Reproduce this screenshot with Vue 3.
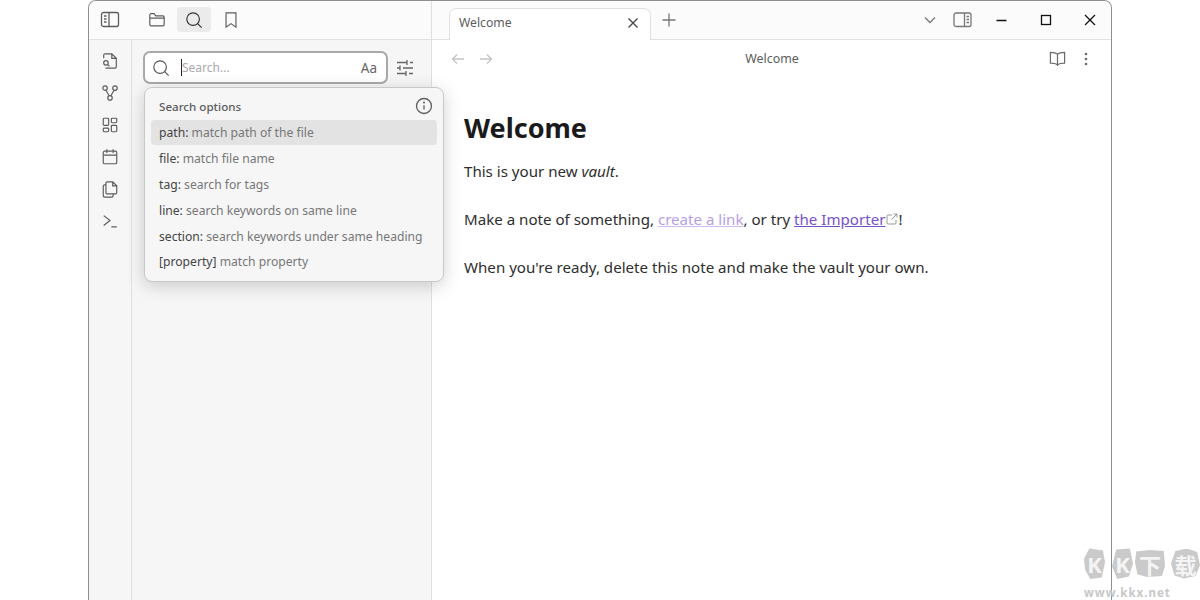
<template>
  <div class="page">
    <div class="window">
      <header class="titlebar">
        <div class="left-head">
          <button class="icon-btn collapse">
            <svg viewBox="0 0 20 20" width="20" height="20"><rect x="1.500" y="2.500" width="17" height="14" rx="2" /><path d="M9 2.500v14M4 6h2.500M4 9h2.500M4 12h2.500" /></svg>
          </button>
          <div class="tabs-head">
            <button class="icon-btn">
              <svg viewBox="0 0 20 20" width="18" height="18"><path d="M2 15V4.500a1.500 1.500 0 0 1 1.500-1.500h3.200l2 2.500h7.800a1.500 1.500 0 0 1 1.500 1.500v8a1.500 1.500 0 0 1-1.500 1.500h-13A1.500 1.500 0 0 1 2 15zM2 8h16" /></svg>
            </button>
            <button class="icon-btn active">
              <svg viewBox="0 0 20 20" width="18" height="18"><circle cx="9" cy="9" r="7" /><path d="M14 14l4.500 4.500" /></svg>
            </button>
            <button class="icon-btn">
              <svg viewBox="0 0 20 20" width="18" height="18"><path d="M4.500 2h11v16L10 14l-5.500 4z" /></svg>
            </button>
          </div>
        </div>
        <div class="tab-strip">
          <div class="tab">
            <span>Welcome</span>
            <svg class="tab-close" viewBox="0 0 12 12" width="12" height="12"><path d="M1.500 1.500l9 9M10.500 1.500l-9 9" /></svg>
          </div>
          <svg class="tab-new" viewBox="0 0 14 14" width="14" height="14"><path d="M7 .5v13M.5 7h13" /></svg>
          <div class="spacer"></div>
          <svg class="chev" viewBox="0 0 12 8" width="12" height="8"><path d="M1 1.500l5 5 5-5" /></svg>
          <svg class="right-toggle" viewBox="0 0 20 16" width="20" height="16"><rect x="1" y="1" width="17" height="13.500" rx="2" /><path d="M11.500 1v13.500M13.500 4.500h2.500M13.500 7.500h2.500M13.500 10.500h2.500" /></svg>
          <div class="win-controls">
            <svg viewBox="0 0 12 12" width="12" height="12"><path d="M.5 6.500h10" /></svg>
            <svg viewBox="0 0 12 12" width="12" height="12"><rect x="1.500" y="1.500" width="9" height="9" /></svg>
            <svg viewBox="0 0 12 12" width="12" height="12"><path d="M1 1l10 10M11 1L1 11" /></svg>
          </div>
        </div>
      </header>

      <div class="body">
        <nav class="ribbon">
          <svg viewBox="0 0 20 20" width="18" height="18"><path d="M3 7V3.500A1.500 1.500 0 0 1 4.500 2H12l5 5v9.500a1.500 1.500 0 0 1-1.500 1.500H5M12 2v5h5" /><circle cx="5.500" cy="12" r="2.500" /><path d="M7.500 14l2 2" /></svg>
          <svg viewBox="0 0 20 20" width="18" height="18"><circle cx="4.500" cy="4.500" r="2.500" /><circle cx="15.500" cy="4.500" r="2.500" /><circle cx="10" cy="15.500" r="2.500" /><path d="M5.500 7l3.500 6M14.500 7L11 13" /></svg>
          <svg viewBox="0 0 20 20" width="18" height="18"><rect x="2.500" y="2.500" width="6" height="8" rx="1" /><rect x="11.500" y="2.500" width="6" height="5" rx="1" /><rect x="11.500" y="10.500" width="6" height="7" rx="1" /><rect x="2.500" y="13.500" width="6" height="4" rx="1" /></svg>
          <svg viewBox="0 0 20 20" width="18" height="18"><rect x="2.500" y="3.500" width="15" height="14" rx="1.500" /><path d="M2.500 8h15M6.500 1.500v4M13.500 1.500v4" /></svg>
          <svg viewBox="0 0 20 20" width="18" height="18"><path d="M7 2h6l4.500 4.500V14a1.500 1.500 0 0 1-1.500 1.500H7A1.500 1.500 0 0 1 5.500 14V3.500A1.500 1.500 0 0 1 7 2zM13 2v4.500h4.500" /><path d="M5.500 5.500H4A1.500 1.500 0 0 0 2.500 7v10.500A1.500 1.500 0 0 0 4 19h8a1.500 1.500 0 0 0 1.500-1.500v-2" /></svg>
          <svg viewBox="0 0 20 20" width="18" height="18"><path d="M3 4l7 5.500L3 15M11.500 16.500h6" /></svg>
        </nav>

        <aside class="sidebar">
          <div class="search-row">
            <div class="search-box">
              <svg class="search-glass" viewBox="0 0 20 20" width="18" height="18"><circle cx="9" cy="9" r="7" /><path d="M14 14l4.500 4.500" /></svg>
              <span class="caret"></span>
              <span class="placeholder">Search...</span>
              <span class="match-case">Aa</span>
            </div>
            <svg class="filter-icon" viewBox="0 0 18 18" width="18" height="18"><path d="M1 3.500h10M14 3.500h3M11 1v5M1 9h3M7 9h10M4 6.500v5M1 14.500h9M13 14.500h4M10 12v5" /></svg>
          </div>

          <div class="popover">
            <div class="pop-head">
              <span>Search options</span>
              <svg viewBox="0 0 18 18" width="18" height="18"><circle cx="9" cy="9" r="7.500" /><path d="M9 8.200v4.300" /><circle class="dot" cx="9" cy="5.500" r="1" /></svg>
            </div>
            <div
              v-for="(opt, i) in options"
              :key="opt.key"
              class="pop-item"
              :class="{ selected: i === 0 }"
            >
              <span class="key">{{ opt.key }}</span> {{ opt.desc }}
            </div>
          </div>
        </aside>

        <main class="content">
          <div class="view-header">
            <div class="nav-arrows">
              <svg viewBox="0 0 14 12" width="14" height="12"><path d="M13 6H1.500M6 1.500L1.500 6 6 10.500" /></svg>
              <svg viewBox="0 0 14 12" width="14" height="12"><path d="M1 6h11.500M8 1.500L12.500 6 8 10.500" /></svg>
            </div>
            <div class="view-title">Welcome</div>
            <div class="view-actions">
              <svg viewBox="0 0 18 18" width="17" height="17"><path d="M9 4.500C7.500 3 5 2.500 1.500 2.500v11.500c3.500 0 6 .5 7.500 1.500 1.500-1 4-1.500 7.500-1.500V2.500C13 2.500 10.500 3 9 4.500zM9 4.500v12.500" /></svg>
              <svg class="dots" viewBox="0 0 4 14" width="4" height="14"><circle cx="2" cy="2" r="1.300" /><circle cx="2" cy="7" r="1.300" /><circle cx="2" cy="12" r="1.300" /></svg>
            </div>
          </div>
          <article class="note">
            <h1>Welcome</h1>
            <p>This is your new <em>vault</em>.</p>
            <p>Make a note of something, <a class="internal">create a link</a>, or try <a class="external">the Importer</a><svg class="ext" viewBox="0 0 12 12" width="12" height="12"><path d="M6 2H2a1 1 0 0 0-1 1v7a1 1 0 0 0 1 1h7a1 1 0 0 0 1-1V7M7.500 1H11v3.500M11 1L5.500 6.500" /></svg>!</p>
            <p>When you're ready, delete this note and make the vault your own.</p>
          </article>
        </main>
      </div>
    </div>

    <div class="watermark">
      <div class="wm-logo">
        <span class="b1">K</span><span class="b2">K</span><span class="b3">下</span><span class="b4">载</span>
      </div>
      <div class="wm-url">www.kkx.net</div>
    </div>
  </div>
</template>

<script setup>
const options = [
  { key: 'path:', desc: 'match path of the file' },
  { key: 'file:', desc: 'match file name' },
  { key: 'tag:', desc: 'search for tags' },
  { key: 'line:', desc: 'search keywords on same line' },
  { key: 'section:', desc: 'search keywords under same heading' },
  { key: '[property]', desc: 'match property' },
]
</script>

<style>
html,
body {
  margin: 0;
  background: #fff;
}
</style>

<style scoped>
.page {
  position: relative;
  width: 1200px;
  height: 600px;
  overflow: hidden;
  background: #fff;
  font-family: "Noto Sans", "Noto Sans CJK SC", sans-serif;
  color: #222;
}
svg {
  fill: none;
  stroke: currentColor;
  stroke-width: 1.3;
  flex: none;
}
.window {
  width: 1024px;
  height: 600px;
  margin-left: 88px;
  box-sizing: border-box;
  border: 1px solid #8e8e8e;
  border-bottom: 0;
  border-radius: 8px 8px 0 0;
  display: flex;
  flex-direction: column;
  overflow: hidden;
}
.titlebar {
  height: 39px;
  flex: none;
  display: flex;
  background: #fbfbfb;
  box-sizing: border-box;
  border-bottom: 1px solid #e0e0e0;
}
.left-head {
  width: 343px;
  flex: none;
  display: flex;
  align-items: center;
  box-sizing: border-box;
  padding: 0 0 2px 11px;
  border-right: 1px solid #e0e0e0;
  margin-bottom: -1px;
}
.icon-btn {
  width: 34px;
  height: 25px;
  border: 0;
  padding: 0;
  background: none;
  border-radius: 4px;
  display: flex;
  align-items: center;
  justify-content: center;
  color: #5c5c5c;
}
.icon-btn.collapse {
  width: 20px;
}
.icon-btn.active {
  background: #ebebeb;
  color: #333;
}
.tabs-head {
  display: flex;
  gap: 3px;
  margin-left: 20px;
}
.tab-strip {
  flex: 1;
  display: flex;
  align-items: center;
  padding-left: 17px;
  color: #5c5c5c;
}
.tab {
  width: 202px;
  height: 32px;
  box-sizing: border-box;
  align-self: flex-end;
  padding: 0 11px 4px 9px;
  background: #fff;
  border: 1px solid #e0e0e0;
  border-bottom: 0;
  border-radius: 7px 7px 0 0;
  display: flex;
  align-items: center;
  justify-content: space-between;
  font-size: 12.200px;
  color: #5c5c5c;
  position: relative;
  top: 1px;
}
.tab-close {
  color: #444;
}
.tab-new {
  margin-left: 11px;
  color: #777;
}
.spacer {
  flex: 1;
}
.chev {
  color: #777;
}
.right-toggle {
  margin-left: 17px;
  color: #777;
}
.win-controls {
  display: flex;
  align-items: center;
  gap: 32px;
  margin-left: 23px;
  margin-right: 15px;
  color: #111;
}
.body {
  flex: 1;
  min-height: 0;
  display: flex;
}
.ribbon {
  width: 43px;
  flex: none;
  box-sizing: border-box;
  padding-top: 12px;
  background: #f6f6f6;
  border-right: 1px solid #e0e0e0;
  display: flex;
  flex-direction: column;
  align-items: center;
  gap: 14px;
  color: #5c5c5c;
}
.sidebar {
  position: relative;
  width: 300px;
  flex: none;
  box-sizing: border-box;
  background: #f6f6f6;
  border-right: 1px solid #e0e0e0;
  padding: 11px 0 0 11px;
}
.search-row {
  display: flex;
  align-items: center;
  gap: 8px;
}
.search-box {
  width: 245px;
  height: 33px;
  box-sizing: border-box;
  background: #fff;
  border: 2.500px solid #a9a9a9;
  border-radius: 7px;
  display: flex;
  align-items: center;
  padding: 0 9px 0 7px;
  color: #555;
}
.caret {
  width: 1px;
  height: 17px;
  background: #222;
  margin-left: 11px;
}
.placeholder {
  font-size: 12px;
  color: #aaa;
  flex: 1;
}
.match-case {
  font-size: 13.500px;
  color: #666;
}
.filter-icon {
  color: #666;
}
.popover {
  position: absolute;
  left: 12px;
  top: 47px;
  width: 300px;
  height: 195px;
  box-sizing: border-box;
  padding: 6px 6px 0;
  background: #f6f6f6;
  border: 1px solid #c8c8c8;
  border-radius: 8px;
  box-shadow: 0 4px 18px rgba(0, 0, 0, 0.18);
  z-index: 2;
}
.pop-head {
  height: 26px;
  box-sizing: border-box;
  display: flex;
  align-items: center;
  justify-content: space-between;
  padding: 0 4px 2px 8px;
  font-size: 11.600px;
  font-weight: 500;
  color: #5c5c5c;
}
.pop-head svg {
  color: #5c5c5c;
}
.pop-head .dot {
  fill: currentColor;
  stroke: none;
}
.pop-item {
  height: 26px;
  line-height: 28px;
  padding: 0 8px;
  font-size: 12.150px;
  white-space: nowrap;
  color: #777;
  border-radius: 4px;
}
.pop-item.selected {
  height: 25px;
  line-height: 25px;
  background: #e3e3e3;
}
.pop-item:last-child {
  line-height: 26px;
}
.key {
  color: #444;
}
.content {
  flex: 1;
  min-width: 0;
  background: #fff;
}
.view-header {
  height: 37px;
  display: flex;
  align-items: center;
  padding: 0 18px 0 19px;
  position: relative;
}
.nav-arrows {
  display: flex;
  gap: 14px;
  color: #c4c4c4;
}
.view-title {
  position: absolute;
  left: 1px;
  right: 0;
  text-align: center;
  font-size: 12.400px;
  color: #5c5c5c;
}
.view-actions {
  margin-left: auto;
  display: flex;
  align-items: center;
  gap: 18px;
  color: #6a6a6a;
  padding-right: 5px;
}
.dots {
  fill: currentColor;
  stroke: none;
}
.note {
  padding: 33px 0 0 32px;
  font-size: 15.100px;
  line-height: 24px;
  color: #2e2e2e;
}
.note h1 {
  margin: 0 0 13px;
  font-size: 27px;
  line-height: 36px;
  font-weight: 700;
  color: #1a1a1a;
}
.note p {
  margin: 0 0 24px;
}
.internal {
  color: #b79ee6;
  text-decoration: underline;
  text-decoration-color: #cdbcee;
}
.external {
  color: #7852c8;
  text-decoration: underline;
}
.ext {
  color: #999;
  margin-left: 1px;
  stroke-width: 1;
}
.watermark {
  position: absolute;
  left: 1084px;
  top: 548px;
  width: 116px;
  color: #c8c8c8;
  font-weight: 700;
}
.wm-logo {
  display: flex;
  align-items: center;
  height: 31px;
}
.wm-logo span {
  display: flex;
  align-items: center;
  justify-content: center;
  background: #cacaca;
  color: #f4f4f4;
  font-size: 22px;
}
.b1 {
  width: 21px;
  height: 31px;
  clip-path: polygon(25% 2%, 90% 8%, 100% 45%, 85% 95%, 30% 100%, 5% 70%, 0 35%);
}
.b2 {
  width: 21px;
  height: 31px;
  margin-left: 7px;
  clip-path: polygon(20% 5%, 85% 2%, 100% 50%, 80% 92%, 25% 100%, 0 60%);
}
.b3 {
  width: 30px;
  height: 27px;
  margin-left: 2px;
  clip-path: polygon(4% 6%, 50% 0, 96% 4%, 100% 60%, 90% 96%, 40% 100%, 8% 90%, 0 45%);
}
.b4 {
  width: 29px;
  height: 30px;
  margin-left: 6px;
  clip-path: polygon(15% 8%, 55% 0, 90% 12%, 100% 55%, 85% 92%, 45% 100%, 12% 90%, 0 50%);
}
.wm-url {
  margin-top: 6px;
  font-size: 11.500px;
  line-height: 15px;
  letter-spacing: 1px;
  white-space: nowrap;
}
</style>
